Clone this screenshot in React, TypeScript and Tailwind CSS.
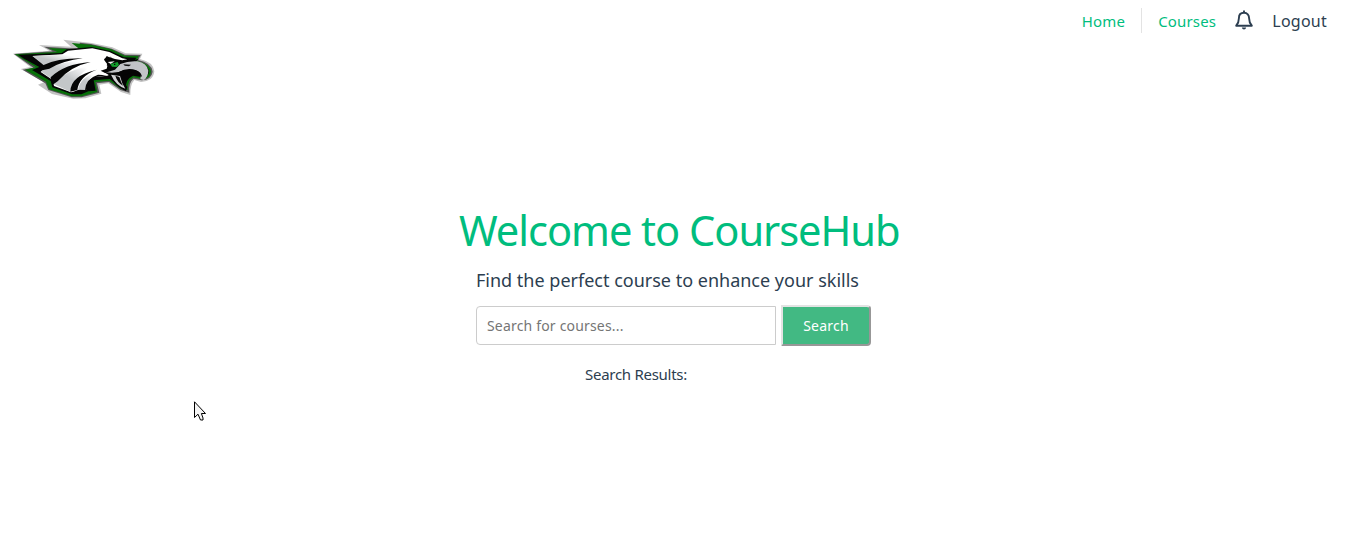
import { useState } from "react";

function EagleLogo() {
  return (
    <svg className="h-[66px] w-[150px]" viewBox="0 0 450 198" role="img" aria-label="Eagle logo">
      <defs>
        <linearGradient id="feather" x1="0" y1="1" x2="1" y2="0">
          <stop offset="0.45" stopColor="#c3c6c8" />
          <stop offset="0.85" stopColor="#fff" />
        </linearGradient>
      </defs>
      <path d="M160 11L245 21L307 34L347 52L397 53L390 69Q430 78 433 106Q430 136 393 138L373 132Q360 146 361 177L333 168L295 142L268 146L274 173L226 187L190 188L126 174L84 146L102 139L32 99L61 93L9 53L118 44L87 27L183 32Z" fill="#c2c2c2" />
      <path d="M210 20L243 24L305 38L345 56L392 57L384 72Q424 80 428 107Q424 132 395 133L371 128Q355 139 358 170L331 162L297 138L261 142L268 170L215 184L185 184L115 162L106 142L38 101L70 95L12 54L128 46L102 32L203 38Z" fill="#555" />
      <path d="M185 21L243 26L304 40L344 59L386 60L379 75Q421 83 423 107Q421 128 396 129L370 124Q351 136 353 162L330 157L298 134L256 138L262 168L215 181L185 181L117 160L108 137L45 101L78 94L15 55L142 48L115 36L211 41Z" fill="#077009" />
      <path d="M24 56L155 51L170 40L245 33L302 45L342 64L379 65L371 78Q414 83 417 107Q415 122 397 124L369 119Q346 130 348 156L328 150L299 129L251 133L257 164L235 166L214 175L186 175L127 154L122 135L66 102L88 93L42 68Z" fill="#050505" />
      <path d="M68 60L157 55L174 44L247 37L298 48L337 67L352 70L337 73L315 69L290 61L282 71L293 86L290 98L272 104L285 111L303 114L292 119L253 123L238 132L229 161L210 160L190 167L183 169L132 150L128 132L92 108L111 91Z" fill="#fff" />
      <path d="M67 60L157 56L218 59Q151 69 107 92Z" fill="url(#feather)" />
      <path d="M92 106Q146 76 235 73Q168 87 127 130Z" fill="url(#feather)" />
      <path d="M130 144Q171 98 255 88Q199 110 182 168Z" fill="url(#feather)" />
      <path d="M204 161Q211 123 257 110L243 126Q228 140 228 161Z" fill="url(#feather)" />
      <path d="M99 88Q142 66 218 67Q160 74 118 98L86 105L88 94Z" fill="#050505" />
      <path d="M122 124Q162 84 242 78Q181 91 143 136L128 146L124 138Z" fill="#050505" />
      <path d="M181 167Q181 119 260 101Q207 121 202 162Z" fill="#050505" />
      <path d="M225 162Q227 128 264 116L290 118L253 124Q238 138 238 160Z" fill="#050505" />
      <path d="M282 68L320 75L362 75L387 68L374 80L347 78L331 84L325 95L304 96L290 88L293 80Z" fill="#050505" />
      <path d="M293 78L314 76L302 84Z" fill="#eee" />
      <path d="M301 84L323 78L327 87L320 93L306 92Z" fill="#129b2b" />
      <path d="M312 83h4v4h-4Z" fill="#050505" />
      <path d="M331 84Q355 74 382 76Q411 82 415 104Q414 124 401 132L391 129Q398 112 379 104Q349 96 321 110L286 110L315 101Z" fill="#c2c4c8" />
      <path d="M284 109L306 111L326 108Q353 93 379 103Q395 110 396 123Q380 108 363 111L336 119L341 138L352 153L348 166Q314 151 297 118Z" fill="#050505" />
      <path d="M303 116L330 120L337 142L346 158Q317 148 303 116Z" fill="#d2d3d5" />
      <path d="M316 119L328 123L333 137L339 149Q322 139 316 119Z" fill="#050505" />
      <path d="M340 85L363 86L357 91L344 89Z" fill="#111" />
      <path d="M290 60L303 75M301 62L309 74" fill="none" stroke="#050505" strokeWidth="1.5" />
    </svg>
  );
}

export default function App() {
  const [query, setQuery] = useState("");
  return (
    <div className="relative min-h-[559px] bg-white font-['Noto_Sans','Open_Sans',sans-serif] text-[#2c3e50]">
      <header className="flex h-[110px] items-start justify-between">
        <a href="#" className="mt-[36px] ml-[10px]"><EagleLogo /></a>
        <nav className="mr-[31px] flex h-[42px] items-center text-[15px]">
          <a href="#" className="tracking-[0.2px] text-[#00bd7e]">Home</a>
          <span className="mr-4 ml-4 h-[25px] w-px -translate-y-px bg-[#e3e3e3]" />
          <a href="#" className="tracking-[0.18px] text-[#00bd7e]">Courses</a>
          <svg className="mr-[18px] ml-[18px] h-5 w-5 -translate-y-px" viewBox="0 0 20 20" fill="none" stroke="#2c3e50" strokeWidth="1.9" strokeLinejoin="round">
            <path d="M10 .4v2.4M10 2.8C6.7 2.8 4.9 5 4.9 8.2C4.9 12.2 4.1 13.4 2.2 15.7H17.8C15.9 13.4 15.1 12.2 15.1 8.2C15.1 5 13.3 2.8 10 2.8Z" />
            <path d="M7.8 17.6h4.4q-.4 2-2.2 2t-2.2-2Z" fill="#2c3e50" stroke="none" />
          </svg>
          <a href="#" className="text-[16px] tracking-[0.25px]">Logout</a>
        </nav>
      </header>
      <main className="mx-auto flex w-[440px] flex-col pt-[89px]">
        <h1 className="text-[41.6px] leading-[62px] tracking-[-1.03px] whitespace-nowrap text-[#00bd7e]">Welcome to CourseHub</h1>
        <p className="mt-1 ml-[17px] text-[18px] leading-[30px] whitespace-nowrap">Find the perfect course to enhance your skills</p>
        <form className="mt-[10px] ml-[17px] flex items-center gap-[5px]" onSubmit={(e) => e.preventDefault()}>
          <input className="h-[39px] w-[300px] rounded-l border border-[#ccc] px-[10px] text-[14px] tracking-[0.18px] outline-none placeholder:text-[#757575]" placeholder="Search for courses..." value={query} onChange={(e) => setQuery(e.target.value)} />
          <button className="h-[41px] w-[90px] rounded-r border-2 border-t-[#e3e3e3] border-r-[#979797] border-b-[#979797] border-l-[#e3e3e3] bg-[#42b983] text-[14px] tracking-[0.2px] text-white">Search</button>
        </form>
        <p className="mt-4 ml-[126px] text-[15px] leading-6 tracking-[-0.28px]">Search Results:</p>
      </main>
      <svg className="absolute top-[400px] left-[193px] h-[22px] w-[14px]" viewBox="0 0 14 22">
        <path d="M1.5 1.8V17.5L5 14.2L7.5 20H10V18L8.4 13.5H12.5Z" fill="#f4f4f4" stroke="#000" />
      </svg>
    </div>
  );
}
